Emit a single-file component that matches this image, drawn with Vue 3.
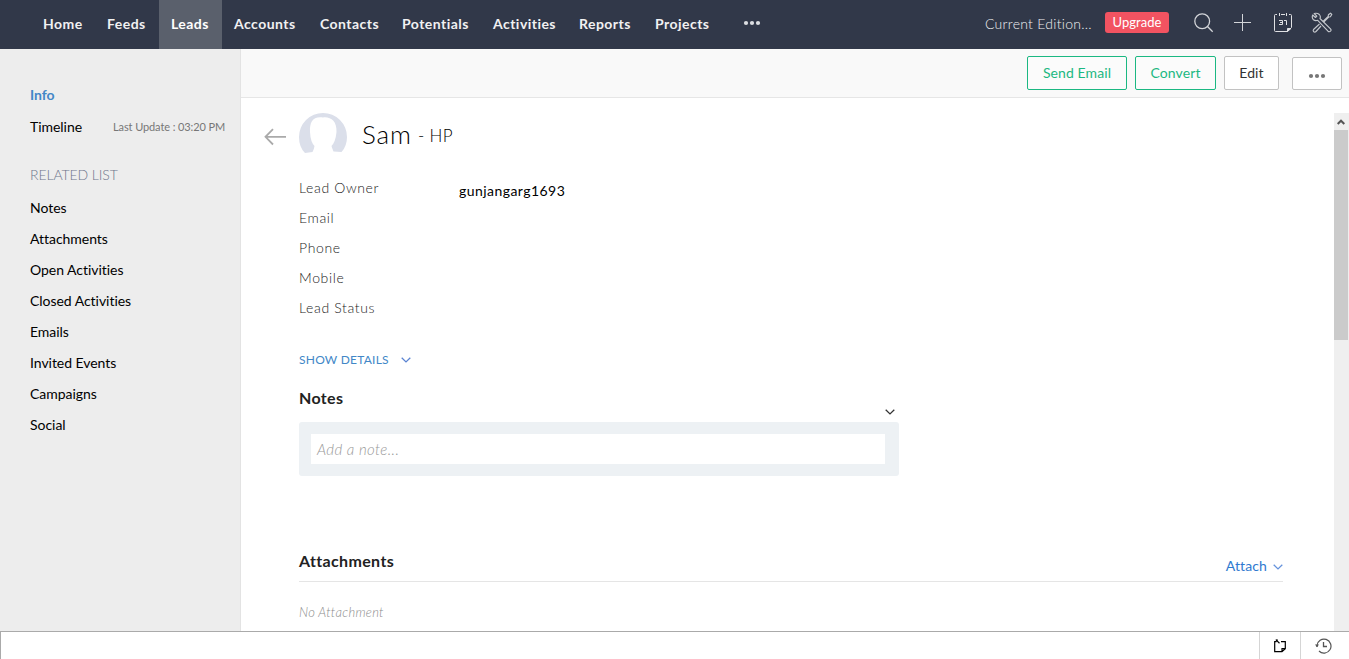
<script setup>
const tabs = [
  { label: 'Home', width: 64 },
  { label: 'Feeds', width: 64 },
  { label: 'Leads', width: 63, active: true },
  { label: 'Accounts', width: 86 },
  { label: 'Contacts', width: 82 },
  { label: 'Potentials', width: 91 },
  { label: 'Activities', width: 86 },
  { label: 'Reports', width: 76 },
  { label: 'Projects', width: 78 },
]
const related = ['Notes', 'Attachments', 'Open Activities', 'Closed Activities', 'Emails', 'Invited Events', 'Campaigns', 'Social']
const fields = [
  { label: 'Lead Owner', value: 'gunjangarg1693' },
  { label: 'Email', value: '' },
  { label: 'Phone', value: '' },
  { label: 'Mobile', value: '' },
  { label: 'Lead Status', value: '' },
]
</script>

<template>
  <div class="page">
    <header class="topbar">
      <nav class="tabs">
        <a v-for="t in tabs" :key="t.label" class="tab" :class="{ active: t.active }" :style="{ width: t.width + 'px' }">{{ t.label }}</a>
      </nav>
      <svg class="more" width="18" height="6" viewBox="0 0 18 6"><g fill="#dcdee2"><circle cx="3" cy="3" r="2.1" /><circle cx="9" cy="3" r="2.1" /><circle cx="15" cy="3" r="2.1" /></g></svg>
      <div class="tools">
        <span class="edition">Current Edition...</span>
        <span class="upgrade">Upgrade</span>
        <svg class="i-search" width="20" height="20" viewBox="0 0 20 20" fill="none" stroke="#d3d5d9" stroke-width="1.3"><circle cx="8.2" cy="8.2" r="7.4" /><path d="M13.5 13.5L18.7 18.7" /></svg>
        <svg class="i-plus" width="17" height="17" viewBox="0 0 17 17" stroke="#d3d5d9"><path d="M0 8.5H17M8.500 0V17" /></svg>
        <svg class="i-cal" width="18" height="20" viewBox="0 0 18 20" fill="none" stroke="#e0e1e4">
          <path d="M3 1.500H1.500Q.5 1.500 .5 2.500V17.500Q.5 18.500 1.500 18.500H13.500L17.500 14.500V2.500Q17.500 1.500 16.500 1.500H15M7 1.500H11M5.500 0V3M12.500 0V3" />
          <path d="M13.500 18.500V15.500H17Z" fill="#e0e1e4" />
          <path d="M5 7.500H8.500V11.500H5M6 9.500H8.500M10 7.500H12.500V12" />
        </svg>
        <svg class="i-tools" width="22" height="22" viewBox="0 0 22 22" fill="none" stroke="#c5c8cd" stroke-width="1.15" stroke-linejoin="round">
          <path d="M3.200 1.500L5.800 4.200L4.500 5.500L1.700 3Q.5 6 2.500 7.800Q4.400 9.300 6.700 8.300L17 19.200Q18.300 20.300 19.500 19.200Q20.600 18 19.500 16.800L9 6.500Q10 4.500 8.300 2.500Q6.200.700 3.200 1.500Z" />
          <path d="M12 9.500L17.200 4.500L17.400 2.800L19.500 1.200L20.800 2.500L19.400 4.700L17.700 5L12.700 10.200M8.500 12L2.500 17.500Q1.700 18.700 2.800 19.700Q3.900 20.500 5 19.500L10 14" />
        </svg>
      </div>
    </header>

    <div class="body">
      <aside class="side">
        <div class="info">Info</div>
        <div class="timeline"><span>Timeline</span><span class="update">Last Update : 03:20 PM</span></div>
        <div class="caption">RELATED LIST</div>
        <a v-for="r in related" :key="r" class="rel">{{ r }}</a>
      </aside>

      <section class="main">
        <div class="actions">
          <button class="btn green send">Send Email</button>
          <button class="btn green convert">Convert</button>
          <button class="btn edit">Edit</button>
          <button class="btn dots"><svg width="18" height="6" viewBox="0 0 18 6"><g fill="#777"><circle cx="3" cy="3" r="2.1" /><circle cx="9" cy="3" r="2.1" /><circle cx="15" cy="3" r="2.1" /></g></svg></button>
        </div>
        <div class="viewport">
          <div class="record">
            <div class="title">
              <svg class="back" width="22" height="18" viewBox="0 0 22 18" fill="none" stroke="#aaa" stroke-width="1.8"><path d="M9 1.200L1.500 8.800L9 16.500M1.500 8.800H22" /></svg>
              <svg class="avatar" width="48" height="40" viewBox="0 0 48 40"><path fill="#dbdfea" d="M6 40Q0 34 0 24A24 24 0 0 1 48 24Q48 33 42.500 39L34.500 38.500Q33 35 32.500 33Q36.500 29 37.500 19C38 8 31.500 3.500 24 4.500C14 3 10.500 9 11 19Q11.500 29 15.500 33Q15 36.500 13.500 39Z" /></svg>
              <span class="name">Sam</span><span class="company">- HP</span>
            </div>
            <div class="fields">
              <div v-for="f in fields" :key="f.label" class="field"><span class="label">{{ f.label }}</span><span class="value">{{ f.value }}</span></div>
            </div>
            <a class="details">SHOW DETAILS<svg width="10" height="6" viewBox="0 0 10 6" fill="none" stroke="#5b84d2" stroke-width="1.300"><path d="M.7.7L5 4.900L9.300.7" /></svg></a>
            <div class="noteshead"><h2>Notes</h2><svg width="10" height="6" viewBox="0 0 10 6" fill="none" stroke="#333" stroke-width="1.300"><path d="M.7.7L5 4.900L9.300.7" /></svg></div>
            <div class="notebox"><div class="noteinput">Add a note...</div></div>
            <div class="atthead"><h2>Attachments</h2><a>Attach<svg width="10" height="6" viewBox="0 0 10 6" fill="none" stroke="#6592dc" stroke-width="1.300"><path d="M.7.7L5 4.900L9.300.7" /></svg></a></div>
            <div class="empty">No Attachment</div>
          </div>
          <div class="scroll">
            <div class="up"><svg width="8" height="6" viewBox="0 0 8 6" fill="none" stroke="#555" stroke-width="2"><path d="M.7 5L4 1.700L7.300 5" /></svg></div>
            <div class="thumb"></div>
          </div>
        </div>
      </section>
    </div>

    <footer class="foot">
      <div class="cell note"><svg width="12" height="14" viewBox="0 0 12 14" fill="none" stroke="#000" stroke-width="1.200"><path d="M2.500 2.700H.7V12.700H8L11.300 9.700V2.700H7M8 12.500V9.700H11M2 .9L5.500 4.200" /><path d="M1.500.5H4L3 3Z" fill="#000" stroke="none" /></svg></div>
      <div class="cell clock"><svg width="17" height="16" viewBox="0 0 17 16" fill="none" stroke="#555"><path d="M2 9V7.500A7 7 0 1 1 4 13" stroke-width="1.200" /><path d="M0 6.500H4L2 9.200Z" fill="#555" stroke="none" /><path d="M8.500 4V8.500H12" stroke-width="1.300" /></svg></div>
    </footer>
  </div>
</template>

<style>
body { margin: 0; overflow: hidden; }
</style>
<style scoped>
* { box-sizing: border-box; }
.page { width: 1349px; height: 659px; display: flex; flex-direction: column; background: #fff; font: 14px/20px Lato, "Open Sans", sans-serif; font-variant-ligatures: none; letter-spacing: .3px; color: #000; overflow: hidden; white-space: nowrap; }
.topbar { height: 49px; flex: none; display: flex; background: #313849; color: #f1f1f2; }
.tabs { display: flex; padding-left: 31px; }
.tab { padding-left: 12px; line-height: 48px; font-weight: 700; letter-spacing: .46px; }
.active { background: #5a606c; color: #fff; }
.more { margin: 20px 0 0 22px; }
.tools { display: flex; margin-left: auto; width: 364px; align-items: flex-start; }
.edition { width: 120px; line-height: 48px; letter-spacing: .28px; font-weight: 300; color: #f0f0f2; }
.upgrade { width: 64px; height: 21px; margin-top: 12px; border-radius: 3px; background: #f25361; color: #fff; text-align: center; font-size: 13px; line-height: 21px; letter-spacing: .05px; }
.i-search { margin: 13px 0 0 25px; }
.i-plus { margin: 14px 0 0 20px; }
.i-cal { margin: 13px 0 0 23px; }
.i-tools { margin: 12px 0 0 19px; }
.body { height: 582px; display: flex; flex: none; }
.side { width: 241px; flex: none; background: #ededed; border-right: 1px solid #e3e3e3; padding: 36px 0 0 30px; letter-spacing: -.04px; }
.info { color: #4287c7; font-weight: 700; height: 32px; }
.timeline { display: flex; height: 48px; }
.timeline > span:first-child { width: 83px; }
.update { font-size: 11px; letter-spacing: -.1px; color: #777; }
.caption { color: #6d768c; height: 33px; font-weight: 300; letter-spacing: -.1px; }
.rel { display: block; height: 31px; }
.main { flex: 1; display: flex; flex-direction: column; min-width: 0; }
.actions { height: 49px; flex: none; background: #f9f9f9; border-bottom: 1px solid #e6e6e6; display: flex; justify-content: flex-end; padding: 7px 7px 0 0; }
.btn { height: 34px; padding: 0; border: 1px solid #c2c2c2; border-radius: 2px; background: #fff; font: inherit; letter-spacing: .1px; color: #333; }
.green { border-color: #1bb882; color: #1bb882; background: #fbfbfb; margin-right: 8px; }
.send { width: 100px; }
.convert { width: 81px; }
.edit { width: 55px; margin-right: 13px; }
.dots { width: 50px; height: 33px; margin-top: 1px; }
.viewport { flex: 1; display: flex; min-height: 0; overflow: hidden; }
.record { flex: 1; padding: 15px 51px 0 58px; }
.title { display: flex; height: 65px; margin-left: -35px; }
.back { margin: 15px 13px 0 0; }
.avatar { margin: 0 15px 0 0; }
.name { font-size: 26px; font-weight: 300; line-height: 42px; letter-spacing: .8px; width: 56px; }
.company { font-size: 17px; font-weight: 300; line-height: 46px; }
.fields { height: 172px; }
.field { display: flex; height: 30px; }
.label { width: 160px; color: #1c1c1c; font-weight: 300; letter-spacing: .64px; }
.value { color: #000; padding-top: 3px; letter-spacing: .45px; }
.details { display: flex; align-items: center; height: 20px; gap: 12px; color: #4287c7; font-size: 12px; letter-spacing: .24px; }
h2 { font-size: 16px; line-height: 20px; margin: -1px 0 0; font-weight: 700; letter-spacing: .35px; color: #222; }
.noteshead { display: flex; justify-content: space-between; width: 596px; margin-top: 19px; height: 33px; }
.noteshead svg { margin-top: 20px; }
.notebox { width: 600px; height: 54px; background: #edf1f4; border-radius: 3px; padding: 12px 14px 12px 12px; }
.noteinput { height: 30px; background: #fff; padding-left: 6px; font-size: 15px; font-style: italic; font-weight: 300; line-height: 30px; letter-spacing: .4px; color: #999; }
.atthead { margin-top: 76px; height: 30px; border-bottom: 1px solid #e5e5e5; display: flex; justify-content: space-between; width: 984px; }
.atthead a { color: #2f79cf; line-height: 26px; display: flex; align-items: center; gap: 6px; height: 27px; letter-spacing: .1px; }
.atthead svg { margin-top: 2px; }
.empty { margin-top: 20px; font-size: 13px; font-style: italic; font-weight: 300; letter-spacing: .28px; color: #8c8c8c; }
.scroll { width: 15px; flex: none; margin-top: 15px; padding-right: 1px; background: #efefef; }
.up { height: 17px; display: flex; align-items: center; justify-content: center; }
.thumb { height: 210px; background: #cbcbcb; }
.foot { height: 28px; flex: none; border-top: 1px solid #aaa; border-left: 1px solid #aaa; display: flex; justify-content: flex-end; background: #fff; }
.cell { border-left: 1px solid #d5d5d5; display: flex; align-items: center; justify-content: center; }
.note { width: 41px; }
.clock { width: 49px; padding-right: 3px; }
</style>
